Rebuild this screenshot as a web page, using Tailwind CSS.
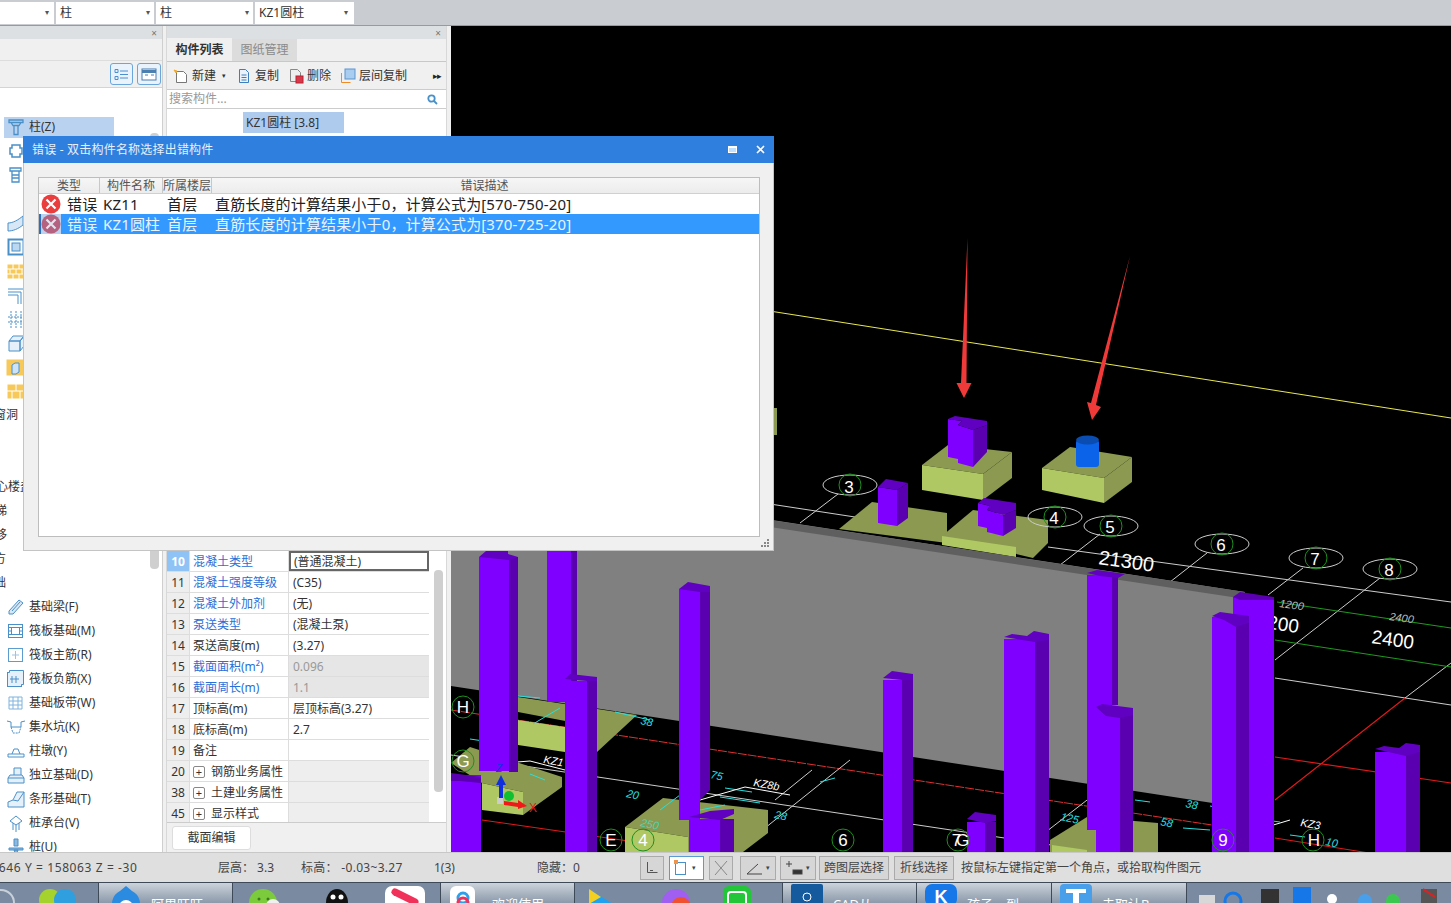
<!DOCTYPE html>
<html lang="zh">
<head>
<meta charset="UTF-8">
<title>错误 - 双击构件名称选择出错构件</title>
<script src="https://cdn.jsdelivr.net/npm/@tailwindcss/browser@4"></script>
</head>
<body class="m-0">
<div class="relative w-[1451px] h-[903px] overflow-hidden flex flex-col text-xs text-[#333] [font-family:'Noto_Sans','Noto_Sans_CJK_SC',sans-serif]">

  <!-- top combo row -->
  <div class="h-[26px] shrink-0 bg-[#c9ccd0] border-b border-[#9a9a9a] flex items-center gap-[2px]">
    <div class="w-[54px] h-[22px] bg-white flex items-center justify-end pr-[5px] text-[8px] text-[#555]">▾</div>
    <div class="w-[98px] h-[22px] bg-white flex items-center justify-between px-[4px]"><span>柱</span><span class="text-[8px] text-[#555]">▾</span></div>
    <div class="w-[97px] h-[22px] bg-white flex items-center justify-between px-[4px]"><span>柱</span><span class="text-[8px] text-[#555]">▾</span></div>
    <div class="w-[99px] h-[22px] bg-white flex items-center justify-between pl-[4px] pr-[6px]"><span>KZ1圆柱</span><span class="text-[8px] text-[#555]">▾</span></div>
  </div>

  <div class="h-[826px] shrink-0 flex bg-[#f0f0f0]">
    <!-- left tree panel -->
    <div class="w-[163px] shrink-0 flex flex-col bg-white overflow-hidden border-r border-[#cfcfcf]">
      <div class="h-[13px] shrink-0 bg-[#dde0e3] flex items-center justify-end pr-[5px] text-[10px] leading-none text-[#777]">×</div>
      <div class="h-[22px] shrink-0 bg-[#f0f0f0] border-b border-[#ddd]"></div>
      <div class="h-[27px] shrink-0 bg-[#f0f0f0] border-b border-[#d4d4d4] flex items-center justify-end gap-[4px] pr-[1px]">
        <div class="w-[23px] h-[22px] rounded-[3px] border border-[#6aa5dc] bg-[#eaf3fb] flex items-center justify-center">
          <svg width="15" height="13" fill="none" stroke="#4a90d0"><path d="M1 1.500h3v3h-3zM1 8.500h3v3h-3zM6 3h8M6 10h8M6 6.500h8"/></svg>
        </div>
        <div class="w-[24px] h-[22px] rounded-[3px] border border-[#6aa5dc] bg-[#eaf3fb] flex items-center justify-center">
          <svg width="16" height="13" fill="none" stroke="#4a7fb0"><rect x="1" y="1" width="14" height="11" fill="#fff"/><path d="M1 3.500h14" stroke-width="3"/><path d="M4 7h3M10 7h3"/></svg>
        </div>
      </div>
      <div class="flex-1 relative pt-[27px] overflow-hidden">
        <div class="flex items-center h-6"><div class="flex items-center w-[110px] h-[21px] ml-1 bg-[#b9d2ef]">
          <svg width="20" height="20" class="ml-[2px] mr-[3px]" fill="none" stroke="#4a90c8" stroke-width="1.300"><path d="M3 3h14v2.500h-14zM5 5.500l2 3h6l2-3M8 8.500v9h4v-9"/></svg><span>柱(Z)</span></div></div>
        <div class="flex items-center h-6 pl-[6px]"><svg width="20" height="20" fill="none" stroke="#4a90c8" stroke-width="1.500"><path d="M6 4h8v3h2v6h-2v3h-8v-3h-2v-6h2z"/></svg></div>
        <div class="flex items-center h-6 pl-[6px]"><svg width="20" height="20" fill="none" stroke="#4a90c8" stroke-width="1.300"><path d="M4 3h11v3h-11zM6 6v11h7v-11M6 10h7M6 13h7"/></svg></div>
        <div class="h-6"></div>
        <div class="flex items-center h-6 pl-[6px]"><svg width="20" height="20" fill="#d7e7f6" stroke="#4a90c8"><path d="M2 10c5 0 10-3 15-7v9c-5 4-10 6-15 6z"/></svg></div>
        <div class="flex items-center h-6 pl-[6px]"><svg width="20" height="20" fill="none" stroke="#4a90c8"><rect x="2.500" y="2.500" width="15" height="15" stroke-width="2"/><rect x="6" y="6" width="8" height="8" fill="#bcd7f0"/></svg></div>
        <div class="flex items-center h-6 pl-[6px]"><svg width="20" height="20" fill="#f6c95a" stroke="#fff"><rect x="1" y="3" width="18" height="15"/><path d="M1 8h18M1 13h18M7 3v5M13 3v5M4 8v5M10 8v5M16 8v5M7 13v5M13 13v5"/></svg></div>
        <div class="flex items-center h-6 pl-[6px]"><svg width="20" height="20" fill="none" stroke="#4a90c8"><path d="M2 4h16v15M2 7h13v12M2 10h10v9"/></svg></div>
        <div class="flex items-center h-6 pl-[6px]"><svg width="20" height="20" fill="none" stroke="#4a90c8" stroke-dasharray="2 1"><path d="M5 2v17M10 2v17M15 2v17M2 8h16M2 13h16"/></svg></div>
        <div class="flex items-center h-6 pl-[6px]"><svg width="20" height="20" fill="#e6f0fa" stroke="#4a90c8"><path d="M3 8l4-5h11l-4 5zM3 8h11v10h-11zM14 8l4-5v10l-4 5z"/></svg></div>
        <div class="flex items-center h-6 pl-[6px]"><svg width="20" height="20" fill="#f6c95a" stroke="#4a90c8"><rect x="1" y="3" width="18" height="15" stroke="#f6c95a"/><path d="M6 8l3-2h4v9l-3 2h-4z" fill="#cfe3f6"/></svg></div>
        <div class="flex items-center h-6 pl-[6px]"><svg width="20" height="20" fill="#f6c95a" stroke="#fff"><rect x="1" y="3" width="18" height="15"/><path d="M1 10h18M10 3v7M6 10v8M14 10v8"/></svg></div>
        <div class="flex items-center h-6"><div class="w-[18px] whitespace-nowrap flex justify-end"><span class="shrink-0">门窗洞</span></div></div>
        <div class="h-6"></div>
        <div class="h-6"></div>
        <div class="flex items-center h-6"><div class="w-[32px] whitespace-nowrap flex justify-end"><span class="shrink-0">空心楼盖</span></div></div>
        <div class="flex items-center h-6"><div class="w-[7px] whitespace-nowrap flex justify-end"><span class="shrink-0">楼梯</span></div></div>
        <div class="flex items-center h-6"><div class="w-[7px] whitespace-nowrap flex justify-end"><span class="shrink-0">平移</span></div></div>
        <div class="flex items-center h-6"><div class="w-[6px] whitespace-nowrap flex justify-end"><span class="shrink-0">土方</span></div></div>
        <div class="flex items-center h-6"><div class="w-[6px] whitespace-nowrap flex justify-end"><span class="shrink-0">基础</span></div></div>
        <div class="flex items-center h-6 pl-[6px] gap-[3px]"><svg width="20" height="20" fill="#d7e7f6" stroke="#4a90c8"><path d="M3 14l10-11 4 3-10 11-4 0z"/><path d="M6 14l8-9"/></svg><span>基础梁(F)</span></div>
        <div class="flex items-center h-6 pl-[6px] gap-[3px]"><svg width="20" height="20" fill="none" stroke="#4a90c8"><rect x="2.500" y="3.500" width="14" height="13"/><rect x="5.500" y="6.500" width="8" height="7"/><path d="M2 6.500h3M2 10h3M14 6.500h3M14 10h3M2 13.500h3M14 13.500h3"/></svg><span>筏板基础(M)</span></div>
        <div class="flex items-center h-6 pl-[6px] gap-[3px]"><svg width="20" height="20" fill="none" stroke="#5c9ccf"><rect x="2.500" y="3.500" width="14" height="13"/><path d="M9.500 6v8M6 10h7" stroke="#9cc3e4"/></svg><span>筏板主筋(R)</span></div>
        <div class="flex items-center h-6 pl-[6px] gap-[3px]"><svg width="20" height="20" fill="#e6f0fa" stroke="#4a90c8"><rect x="1.500" y="3.500" width="14" height="14"/><path d="M3.500 3.500v-2h14v14h-2"/><path d="M4 10h9M6 7v7M10 7v7" fill="none"/></svg><span>筏板负筋(X)</span></div>
        <div class="flex items-center h-6 pl-[6px] gap-[3px]"><svg width="20" height="20" fill="none" stroke="#7eb3de"><path d="M3 4h13v12h-13zM7 4v12M12 4v12M3 8h13M3 12h13"/></svg><span>基础板带(W)</span></div>
        <div class="flex items-center h-6 pl-[6px] gap-[3px]"><svg width="20" height="20" fill="none" stroke="#4a90c8"><path d="M1 4l4 1v5h10v-5l4-1"/><path d="M5 10l2 6h6l2-6" stroke-dasharray="2 1"/></svg><span>集水坑(K)</span></div>
        <div class="flex items-center h-6 pl-[6px] gap-[3px]"><svg width="20" height="20" fill="none" stroke="#4a90c8"><path d="M2 13h16v3h-16zM6 13l2-5h4l2 5"/></svg><span>柱墩(Y)</span></div>
        <div class="flex items-center h-6 pl-[6px] gap-[3px]"><svg width="20" height="20" fill="#e6f0fa" stroke="#4a90c8"><path d="M2 13l2-3h12l2 3v5h-16zM8 10v-7h7v7"/><path d="M2 13h16"/></svg><span>独立基础(D)</span></div>
        <div class="flex items-center h-6 pl-[6px] gap-[3px]"><svg width="20" height="20" fill="#e6f0fa" stroke="#4a90c8"><path d="M2 18v-5l5-2 4-8h7v15z"/><path d="M7 11l5 1 6-9"/></svg><span>条形基础(T)</span></div>
        <div class="flex items-center h-6 pl-[6px] gap-[3px]"><svg width="20" height="20" fill="none" stroke="#4a90c8"><path d="M4 8l6-5 6 5-6 4zM7 10v7M10 12v7M13 10v7"/></svg><span>桩承台(V)</span></div>
        <div class="flex items-center h-6 pl-[6px] gap-[3px]"><svg width="20" height="20" fill="#8db9df" stroke="#4a90c8"><path d="M8 2h4v7h-4zM3 11h14v2h-14zM8 13h4l-2 5z"/></svg><span>桩(U)</span></div>
        <!-- scrollbar thumb -->
        <div class="absolute left-[150px] top-[45px] w-[9px] h-[436px] rounded-[4px] bg-[#cfcfcf]"></div>
      </div>
    </div>

    <div class="w-[3px] shrink-0"></div>

    <!-- component list + property panel -->
    <div class="w-[281px] shrink-0 flex flex-col border-x border-[#d8d8d8]">
      <div class="h-[13px] shrink-0 bg-[#dde0e3] flex items-center justify-end pr-[5px] text-[10px] leading-none text-[#777]">×</div>
      <div class="h-[23px] shrink-0 flex items-end border-b border-[#c8c8c8]">
        <div class="w-[65px] h-[23px] flex items-center justify-center font-bold bg-[#f0f0f0]">构件列表</div>
        <div class="w-[65px] h-[22px] flex items-center justify-center bg-[#dcdcdc] text-[#8a8a8a]">图纸管理</div>
      </div>
      <div class="h-[28px] shrink-0 flex items-center pl-[6px] border-b border-[#ccc]">
        <svg width="16" height="16" fill="#fff" stroke="#777"><path d="M3.500 3.500h7l3 3v8h-10z"/><path d="M1 2l3 1-1 2z" fill="#f2a82b" stroke="#f2a82b"/></svg>
        <span class="ml-[3px]">新建</span><span class="ml-[6px] text-[7px]">▾</span>
        <svg width="14" height="16" class="ml-[11px]" fill="#eaf2fa" stroke="#3c7fbf"><path d="M2.500 1.500h6l3 3v10h-9z"/><path d="M4.500 7h5M4.500 9.500h5M4.500 12h5"/></svg>
        <span class="ml-[4px]">复制</span>
        <svg width="16" height="16" class="ml-[9px]" fill="#eee" stroke="#888"><path d="M2.500 1.500h7l3 3v9h-10z"/><rect x="8" y="8" width="7" height="7" fill="#d8394a" stroke="#b82030"/></svg>
        <span class="ml-[3px]">删除</span>
        <svg width="16" height="16" class="ml-[9px]" fill="none" stroke="#f08a24"><path d="M1.500 5v9.500h9"/><rect x="5" y="1" width="10" height="10" fill="#a9cdf0" stroke="#5a94cf"/></svg>
        <span class="ml-[3px]">层间复制</span>
        <span class="ml-auto mr-[5px] text-[9px] tracking-[-1px] text-[#222]">▸▸</span>
      </div>
      <div class="h-[19px] shrink-0 bg-white border-b border-[#ccc] flex items-center justify-between pl-[2px] pr-[8px] text-[#999]">
        <span>搜索构件...</span>
        <svg width="11" height="11" fill="none" stroke="#4a90c8" stroke-width="1.800"><circle cx="4.500" cy="4.500" r="3.200"/><path d="M7 7l3 3"/></svg>
      </div>
      <div class="flex-1 bg-white pt-[3px] pl-[76px]">
        <div class="w-[101px] h-[21px] bg-[#aecbee] flex items-center pl-[3px]">KZ1圆柱 [3.8]</div>
      </div>
      <div class="relative h-[271px] shrink-0 bg-white">
        <div class="w-[262px] h-[271px] overflow-hidden [&>div>div]:pt-[1px]">
          <div class="flex h-[21px] border-b border-[#ddd]"><div class="w-[22px] bg-[#8fc2f5] text-white font-bold flex items-center justify-center">10</div><div class="w-[100px] pl-[3px] flex items-center text-[#2a6fd6] border-x border-[#ddd]">混凝土类型</div><div class="w-[140px] pl-[3px] flex items-center border-2 border-[#666]">(普通混凝土)</div></div>
          <div class="flex h-[21px] border-b border-[#ddd]"><div class="w-[22px] bg-[#eee] flex items-center justify-center">11</div><div class="w-[100px] pl-[3px] flex items-center text-[#2a6fd6] border-x border-[#ddd]">混凝土强度等级</div><div class="w-[140px] pl-[4px] flex items-center">(C35)</div></div>
          <div class="flex h-[21px] border-b border-[#ddd]"><div class="w-[22px] bg-[#eee] flex items-center justify-center">12</div><div class="w-[100px] pl-[3px] flex items-center text-[#2a6fd6] border-x border-[#ddd]">混凝土外加剂</div><div class="w-[140px] pl-[4px] flex items-center">(无)</div></div>
          <div class="flex h-[21px] border-b border-[#ddd]"><div class="w-[22px] bg-[#eee] flex items-center justify-center">13</div><div class="w-[100px] pl-[3px] flex items-center text-[#2a6fd6] border-x border-[#ddd]">泵送类型</div><div class="w-[140px] pl-[4px] flex items-center">(混凝土泵)</div></div>
          <div class="flex h-[21px] border-b border-[#ddd]"><div class="w-[22px] bg-[#eee] flex items-center justify-center">14</div><div class="w-[100px] pl-[3px] flex items-center border-x border-[#ddd]">泵送高度(m)</div><div class="w-[140px] pl-[4px] flex items-center">(3.27)</div></div>
          <div class="flex h-[21px] border-b border-[#ddd]"><div class="w-[22px] bg-[#eee] flex items-center justify-center">15</div><div class="w-[100px] pl-[3px] flex items-center text-[#2a6fd6] border-x border-[#ddd]">截面面积(m²)</div><div class="w-[140px] pl-[4px] flex items-center bg-[#e6e6e6] text-[#999]">0.096</div></div>
          <div class="flex h-[21px] border-b border-[#ddd]"><div class="w-[22px] bg-[#eee] flex items-center justify-center">16</div><div class="w-[100px] pl-[3px] flex items-center text-[#2a6fd6] border-x border-[#ddd]">截面周长(m)</div><div class="w-[140px] pl-[4px] flex items-center bg-[#e6e6e6] text-[#999]">1.1</div></div>
          <div class="flex h-[21px] border-b border-[#ddd]"><div class="w-[22px] bg-[#eee] flex items-center justify-center">17</div><div class="w-[100px] pl-[3px] flex items-center border-x border-[#ddd]">顶标高(m)</div><div class="w-[140px] pl-[4px] flex items-center">层顶标高(3.27)</div></div>
          <div class="flex h-[21px] border-b border-[#ddd]"><div class="w-[22px] bg-[#eee] flex items-center justify-center">18</div><div class="w-[100px] pl-[3px] flex items-center border-x border-[#ddd]">底标高(m)</div><div class="w-[140px] pl-[4px] flex items-center">2.7</div></div>
          <div class="flex h-[21px] border-b border-[#ddd]"><div class="w-[22px] bg-[#eee] flex items-center justify-center">19</div><div class="w-[100px] pl-[3px] flex items-center border-x border-[#ddd]">备注</div><div class="w-[140px]"></div></div>
          <div class="flex h-[21px] border-b border-[#ddd]"><div class="w-[22px] bg-[#eee] flex items-center justify-center">20</div><div class="w-[100px] pl-[3px] flex items-center gap-[6px] border-x border-[#ddd]"><span class="w-[12px] h-[12px] border border-[#888] rounded-[2px] flex items-center justify-center text-[11px] leading-none">+</span>钢筋业务属性</div><div class="w-[140px] bg-[#eee]"></div></div>
          <div class="flex h-[21px] border-b border-[#ddd]"><div class="w-[22px] bg-[#eee] flex items-center justify-center">38</div><div class="w-[100px] pl-[3px] flex items-center gap-[6px] border-x border-[#ddd]"><span class="w-[12px] h-[12px] border border-[#888] rounded-[2px] flex items-center justify-center text-[11px] leading-none">+</span>土建业务属性</div><div class="w-[140px] bg-[#eee]"></div></div>
          <div class="flex h-[21px] border-b border-[#ddd]"><div class="w-[22px] bg-[#eee] flex items-center justify-center">45</div><div class="w-[100px] pl-[3px] flex items-center gap-[6px] border-x border-[#ddd]"><span class="w-[12px] h-[12px] border border-[#888] rounded-[2px] flex items-center justify-center text-[11px] leading-none">+</span>显示样式</div><div class="w-[140px] bg-[#eee]"></div></div>
        </div>
        <div class="absolute left-[267px] top-[19px] w-[9px] h-[222px] rounded-[4px] bg-[#cfcfcf]"></div>
      </div>
      <div class="h-[30px] shrink-0 bg-[#f0f0f0] border-t border-[#ccc] flex items-center pl-[5px]">
        <div class="w-[79px] h-[24px] bg-white border border-[#ddd] rounded-[3px] flex items-center justify-center">截面编辑</div>
      </div>
    </div>

    <div class="w-[4px] shrink-0"></div>

    <!-- 3D view -->
    <div class="flex-1 bg-black overflow-hidden">
      <svg width="1000" height="826" viewBox="451 26 1000 826" class="block" font-family="Liberation Sans, sans-serif">
        <path d="M451 261L1451 418" stroke="#e8e850" fill="none"/>
        <!-- plan grid behind wall -->
        <g fill="none" stroke="#ccc">
          <path d="M770 504L855 517M1048 547L1451 602M1275 678L1451 705"/>
          <path d="M838 494L800 523M1100 534L1060 565M1207 553L1170 582M1303 568L1268 595M1380 578L1275 660M1405 698L1451 663"/>
        </g>
        <g fill="none" stroke="#1f9a1f"><path d="M1277 602L1451 628M1275 640L1451 667"/></g>
        <path d="M1275 757L1451 783M1275 800L1405 698" stroke="#e01a1a" fill="none" stroke-width="1.200"/>

        <!-- far slabs -->
        <rect x="774" y="408" width="3" height="27" fill="#8b9a50"/>
        <path d="M922 465L948 445L1012 452L983 474z" fill="#8b9a50"/><path d="M922 465L983 474V500L922 490z" fill="#b0c864"/><path d="M983 474L1012 452V478L983 500z" fill="#8b9a50"/>
        <path d="M1042 468L1070 447L1132 457L1104 478z" fill="#8b9a50"/><path d="M1042 468L1104 478V503L1042 490z" fill="#b0c864"/><path d="M1104 478L1132 457V482L1104 503z" fill="#8b9a50"/>
        <path d="M839 529L872 502L947 513V543z" fill="#8b9a50"/>
        <path d="M942 536L973 510L1048 520V543L1033 558z" fill="#8b9a50"/><path d="M942 536L1016 547V557L942 545z" fill="#b0c864"/>

        <!-- L-shaped and round columns on slabs -->
        <path d="M948 419V457L958 459V463L973 467V430L958 425L962 421z" fill="#7f00ff"/><path d="M973 430L987 425V452L973 467z" fill="#5a00b0"/><path d="M948 419L955 416L987 421V425L973 430L958 425L962 421z" fill="#6000c0"/>
        <rect x="1076" y="440" width="23" height="27" rx="3" fill="#0a63e8"/><ellipse cx="1087.500" cy="440" rx="11.500" ry="4.500" fill="#0a4cb0"/>
        <path d="M878 487V523L897 526V490z" fill="#7f00ff"/><path d="M897 490L908 483V518L897 526z" fill="#5a00b0"/><path d="M878 487L886 479L908 483L897 490z" fill="#6000c0"/>
        <path d="M978 503V526L987 528V532L1003 536V515L987 510L990 506z" fill="#7f00ff"/><path d="M1003 515L1016 510V528L1003 536z" fill="#5a00b0"/><path d="M978 503L984 498L1016 503V510L1003 515L987 510L990 506z" fill="#6000c0"/>

        <!-- red pointers -->
        <polygon points="967.500,238 966.500,383 971.500,383 964,398 956.500,383 961,383" fill="#f03a3a"/>
        <polygon points="1130,256 1096,405 1101,407 1092,420 1087,402 1091,403" fill="#f03a3a"/>

        <!-- axis bubbles -->
        <g fill="none" stroke="#ccc">
          <ellipse cx="850" cy="485" rx="27" ry="10"/><ellipse cx="1055" cy="517" rx="27" ry="10"/><ellipse cx="1111" cy="526" rx="27" ry="10"/><ellipse cx="1222" cy="544" rx="27" ry="10"/><ellipse cx="1316" cy="558" rx="27" ry="10"/><ellipse cx="1390" cy="569" rx="27" ry="10"/>
        </g>
        <g fill="none" stroke="#1f8f1f">
          <circle cx="850" cy="485" r="11"/><circle cx="1055" cy="517" r="11"/><circle cx="1111" cy="526" r="11"/><circle cx="1222" cy="544" r="11"/><circle cx="1316" cy="558" r="11"/><circle cx="1390" cy="569" r="11"/>
        </g>
        <g fill="#fff" font-size="17" text-anchor="middle">
          <text x="849" y="493">3</text><text x="1054" y="524">4</text><text x="1110" y="533">5</text><text x="1221" y="551">6</text><text x="1315" y="565">7</text><text x="1389" y="576">8</text>
        </g>
        <text x="1098" y="564" fill="#fff" font-size="20" transform="rotate(8 1098 564)">21300</text>
        <text x="1256" y="627" fill="#fff" font-size="19" transform="rotate(8 1256 627)">1200</text>
        <text x="1371" y="643" fill="#fff" font-size="19" transform="rotate(8 1371 643)">2400</text>
        <text x="1279" y="607" fill="#bbb" font-size="11" font-style="italic" transform="rotate(8 1279 607)">1200</text>
        <text x="1389" y="620" fill="#bbb" font-size="11" font-style="italic" transform="rotate(8 1389 620)">2400</text>

        <!-- wall -->
        <path d="M451 471L1245 592V808L451 686z" fill="#808080"/>
        <path d="M770 520L1245 592V599L770 527z" fill="#5f5f5f"/>

        <!-- near plan lines -->
        <path d="M451 710L1212 825" stroke="#e03030" stroke-dasharray="9 1" fill="none"/>
        <path d="M451 755L1451 905" stroke="#ccc" fill="none"/>
        <path d="M482 820L677 848" stroke="#e01a1a" fill="none"/>
        <path d="M1275 838L1451 866" stroke="#e01a1a" fill="none"/>
        <path d="M775 800L812 770M735 852L850 760M1020 852L1100 790" stroke="#ccc" fill="none"/>
        <path d="M1240 835L1290 820" stroke="#fff" fill="none"/>

        <!-- near slabs -->
        <path d="M518 697L637 715L597 752V727L518 712z" fill="#8b9a50"/><path d="M518 720L565 727V752L518 745z" fill="#b0c864"/>
        <path d="M451 763L470 747L562 777V787L523 815V792L482 783z" fill="#8b9a50"/><path d="M482 783L523 792V815L482 810z" fill="#b0c864"/>
        <path d="M625 827L663 798L768 810V833L743 852H688V837z" fill="#8b9a50"/><path d="M625 827L688 837V852H625z" fill="#b0c864"/>
        <path d="M1050 840L1087 817L1158 823V852H1050z" fill="#8b9a50"/><path d="M1052 845L1087 850V852H1052z" fill="#b0c864"/>

        <!-- cyan dimension marks -->
        <g fill="none" stroke="#28e0e0">
          <path d="M518 696L540 698M470 739L490 742M533 724L560 708M615 712L650 720M530 774L545 780M660 810L680 795M700 810L725 805M720 797L760 803M725 788L752 792M820 782L835 778M1135 800L1150 802M1183 828L1210 830M1210 806L1230 810M1250 818L1280 822M1290 835L1305 837"/>
        </g>
        <g fill="#28e0e0" font-size="11" font-style="italic">
          <text x="640" y="724" transform="rotate(12 640 724)">38</text>
          <text x="626" y="797" transform="rotate(12 626 797)">20</text>
          <text x="710" y="778" transform="rotate(12 710 778)">75</text>
          <text x="774" y="818" transform="rotate(12 774 818)">28</text>
          <text x="640" y="826" transform="rotate(12 640 826)" fill="#55d0b0">250</text>
          <text x="1060" y="820" transform="rotate(12 1060 820)">125</text>
          <text x="1185" y="807" transform="rotate(12 1185 807)">38</text>
          <text x="1160" y="825" transform="rotate(12 1160 825)">58</text>
          <text x="1325" y="845" transform="rotate(12 1325 845)">10</text>
        </g>
        <g fill="#fff" font-size="11" font-style="italic">
          <text x="543" y="763" transform="rotate(10 543 763)">KZ1</text>
          <text x="753" y="786" transform="rotate(10 753 786)">KZ8b</text>
          <text x="1300" y="826" transform="rotate(10 1300 826)">KZ3</text>
        </g>
        <path d="M517 762L530 761L565 770M700 800L745 787L790 795" stroke="#fff" fill="none"/>

        <!-- columns, back to front -->
        <g>
          <path d="M547 540H571V702H547z" fill="#7f00ff"/><path d="M571 540H577V700H571z" fill="#5a00b0"/>
          <path d="M479 557H509V771H479z" fill="#7f00ff"/><path d="M509 557H518V772H509z" fill="#5a00b0"/><path d="M479 557L486 551H508V554L518 557L509 560z" fill="#6000c0"/>
          <path d="M565 681H587V852H565z" fill="#7f00ff"/><path d="M587 681H597V852H587z" fill="#5a00b0"/><path d="M565 679L570 674L597 677V681H587z" fill="#6000c0"/>
          <path d="M679 589H700V820H679z" fill="#7f00ff"/><path d="M700 589H710V790L700 800z" fill="#5a00b0"/><path d="M679 589L688 582L710 586V592L700 592z" fill="#6000c0"/>
          <path d="M689 819H720V852H689z" fill="#7f00ff"/><path d="M720 819H734V852H720z" fill="#5a00b0"/><path d="M689 817L710 811L734 809V814L720 820z" fill="#6000c0"/>
          <path d="M883 680H902V852H883z" fill="#7f00ff"/><path d="M902 680H913V852H902z" fill="#5a00b0"/><path d="M883 678L892 671L913 674V680H902z" fill="#6000c0"/>
          <path d="M451 775H481V852H451z" fill="#7f00ff"/><path d="M451 773L481 777V783L460 781H451z" fill="#5a00b0"/>
          <path d="M967 822H985V852H967z" fill="#7f00ff"/><path d="M985 822H996V852H985z" fill="#5a00b0"/><path d="M967 819L975 812L996 815V821L985 823z" fill="#6000c0"/>
          <path d="M1004 639H1035V852H1004z" fill="#7f00ff"/><path d="M1035 639H1049V852H1035z" fill="#5a00b0"/><path d="M1004 637L1012 634L1027 636L1034 631L1049 634V640L1035 642z" fill="#6000c0"/>
          <path d="M1087 575H1112V830H1087z" fill="#7f00ff"/><path d="M1112 577H1118V705H1112z" fill="#5a00b0"/><path d="M1087 573L1097 570L1125 574L1118 578L1100 576z" fill="#6000c0"/>
          <path d="M1096 715H1120V852H1096zM1087 710H1100V830H1087z" fill="#7f00ff"/><path d="M1120 715H1133V852H1120z" fill="#5a00b0"/><path d="M1096 707L1102 704L1133 708V715L1120 718L1106 716z" fill="#6000c0"/>
          <path d="M1233 597H1274V852H1233z" fill="#7f00ff"/><path d="M1233 597L1240 592L1274 597V600L1240 600z" fill="#5a00b0"/>
          <path d="M1212 617H1236V852H1212z" fill="#7f00ff"/><path d="M1236 617H1249V852H1236z" fill="#5a00b0"/><path d="M1212 616L1220 612L1249 616V623L1236 627L1224 620z" fill="#6000c0"/>
          <path d="M1375 752H1406V852H1375z" fill="#7f00ff"/><path d="M1406 752H1420V852H1406z" fill="#5a00b0"/><path d="M1375 749L1384 746L1399 748L1406 743L1420 745V752L1406 756z" fill="#6000c0"/>
        </g>

        <!-- letters over the near view -->
        <g fill="none" stroke="#1f8f1f">
          <circle cx="463" cy="707" r="11"/><circle cx="463" cy="761" r="11"/><circle cx="611" cy="840" r="11"/><circle cx="643" cy="840" r="11"/><circle cx="843" cy="840" r="11"/><circle cx="958" cy="840" r="11"/><circle cx="1223" cy="840" r="11"/><circle cx="1313" cy="840" r="11"/>
        </g>
        <g fill="#fff" font-size="17" text-anchor="middle">
          <text x="463" y="713">H</text><text x="463" y="767">G</text><text x="611" y="846">E</text><text x="643" y="846">4</text><text x="843" y="846">6</text><text x="958" y="846" letter-spacing="-5">7G</text><text x="1223" y="846">9</text><text x="1314" y="846">H</text>
        </g>

        <!-- axis gizmo -->
        <rect x="497" y="797" width="6" height="7" fill="#ccc"/>
        <polygon points="499,798 499,785 496,785 501,775 506,785 503,785 503,798" fill="#1030e0"/>
        <circle cx="509" cy="796" r="5" fill="#10c030"/>
        <polygon points="504,801 518,803 518,800 527,806 518,809 518,807 504,805" fill="#f01818"/>
        <text x="529" y="812" fill="#f01818" font-size="12">X</text>
        <text x="496" y="772" fill="#1030e0" font-size="10" font-style="italic">Z</text>
      </svg>
    </div>
  </div>

  <!-- status bar -->
  <div class="h-[30px] shrink-0 bg-[#dfdfdf] border-t border-[#c8c8c8] flex items-center text-[#444] whitespace-nowrap">
    <div class="w-[218px] overflow-hidden flex"><span class="-ml-[5px] tracking-[0.6px]">.646 Y = 158063 Z = -30</span></div>
    <div class="w-[83px]">层高： 3.3</div>
    <div class="w-[133px] tracking-[0.3px]">标高： -0.03~3.27</div>
    <div class="w-[103px]">1(3)</div>
    <div class="w-[103px]">隐藏：0</div>
    <div class="w-[24px] h-[24px] border border-[#aaa] bg-[#d6d6d6] flex items-center justify-center"><svg width="14" height="14" fill="none" stroke="#555"><path d="M2.500 1v10.500h10M5 9.500h3"/></svg></div>
    <div class="w-[35px] h-[24px] ml-[5px] border border-[#5b9bd5] bg-white flex items-center pl-[4px] gap-[4px]"><svg width="14" height="16" fill="none" stroke="#4a90c8"><rect x="1.500" y="2.500" width="10" height="12"/><rect x="0" y="0" width="4" height="4" fill="#f0944a" stroke="none"/></svg><span class="text-[7px]">▾</span></div>
    <div class="w-[24px] h-[24px] ml-[5px] border border-[#aaa] bg-[#d6d6d6] flex items-center justify-center"><svg width="16" height="16" fill="none" stroke="#888"><path d="M2 1l12 14M14 1l-12 14"/></svg></div>
    <div class="w-[36px] h-[24px] ml-[7px] border border-[#aaa] bg-[#d6d6d6] flex items-center pl-[4px] gap-[3px]"><svg width="18" height="16" fill="none" stroke="#444"><path d="M2 14h15M2 14l11-10"/></svg><span class="text-[7px]">▾</span></div>
    <div class="w-[36px] h-[24px] ml-[4px] border border-[#aaa] bg-[#d6d6d6] flex items-center pl-[4px] gap-[3px]"><svg width="18" height="16" fill="none" stroke="#444"><path d="M1 4h6M4 1v6"/><rect x="8" y="10" width="9" height="4" fill="#333"/></svg><span class="text-[7px]">▾</span></div>
    <div class="w-[70px] h-[24px] ml-[3px] border border-[#aaa] bg-[#d6d6d6] flex items-center justify-center">跨图层选择</div>
    <div class="w-[60px] h-[24px] ml-[5px] border border-[#aaa] bg-[#d6d6d6] flex items-center justify-center">折线选择</div>
    <div class="ml-[7px]">按鼠标左键指定第一个角点，或拾取构件图元</div>
  </div>

  <!-- taskbar, cut off by the bottom of the shot -->
  <div class="h-[21px] shrink-0 bg-[#7a8ba1] border-t border-[#3f4a58] flex overflow-hidden">
    <div class="w-[98px] shrink-0 relative">
      <svg width="98" height="21"><circle cx="1" cy="20" r="13" fill="none" stroke="#c8d0da" stroke-width="2"/><circle cx="50" cy="17" r="11" fill="#a6d22e"/><circle cx="65" cy="17" r="11" fill="#2f9fe0"/></svg>
    </div>
    <div class="w-[135px] shrink-0 bg-gradient-to-b from-[#ccd3db] to-[#8b99aa] border-x border-[#3f4a58] flex pl-[10px] gap-[8px]">
      <svg width="34" height="21"><path d="M17 0l6 5a14 14 0 1 1-12 0z" transform="translate(0 3)" fill="#2a8be0"/><circle cx="17" cy="24" r="7" fill="#fff"/></svg>
      <span class="mt-[15px] text-white text-[13px] leading-none">阿里旺旺</span>
    </div>
    <div class="w-[207px] shrink-0">
      <svg width="207" height="21"><circle cx="30" cy="20" r="14" fill="#7ccb3c"/><circle cx="26" cy="16" r="1.500" fill="#3c7a1c"/><circle cx="35" cy="16" r="1.500" fill="#3c7a1c"/><circle cx="40" cy="23" r="7" fill="#f0f0f0"/><ellipse cx="104" cy="20" rx="11" ry="14" fill="#111"/><circle cx="100" cy="14" r="2.500" fill="#fff"/><circle cx="108" cy="14" r="2.500" fill="#fff"/><rect x="152" y="3" width="40" height="30" rx="7" fill="#fff"/><path d="M162 9l20 10" stroke="#f0325a" stroke-width="7" stroke-linecap="round"/></svg>
    </div>
    <div class="w-[135px] shrink-0 bg-gradient-to-b from-[#ccd3db] to-[#8b99aa] border-x border-[#3f4a58] flex pl-[9px] gap-[17px]">
      <svg width="25" height="21"><rect x="0" y="3" width="25" height="28" rx="6" fill="#fff"/><circle cx="13" cy="15" r="5" fill="none" stroke="#2fa0e8" stroke-width="3"/><path d="M8 20a5 5 0 0 1 10 0" stroke="#f0325a" stroke-width="3" fill="none"/></svg>
      <span class="mt-[15px] text-white text-[13px] leading-none">欢迎使用</span>
    </div>
    <div class="w-[207px] shrink-0">
      <svg width="207" height="21"><path d="M14 6l24 15h-24z" fill="#1fa0f0"/><path d="M14 6l12 8-12 7z" fill="#f5d020"/><circle cx="101" cy="20" r="14" fill="#a05ff0"/><circle cx="106" cy="24" r="10" fill="#f05030"/><rect x="148" y="3" width="28" height="30" rx="6" fill="#22c638"/><rect x="153" y="9" width="18" height="20" rx="3" fill="none" stroke="#fff" stroke-width="2"/></svg>
    </div>
    <div class="w-[135px] shrink-0 bg-gradient-to-b from-[#ccd3db] to-[#8b99aa] border-x border-[#3f4a58] flex pl-[8px] gap-[10px]">
      <svg width="32" height="21"><rect x="0" y="1" width="32" height="22" rx="2" fill="#155a9c"/><circle cx="16" cy="14" r="4" fill="none" stroke="#fff"/></svg>
      <span class="mt-[15px] text-white text-[13px] leading-none">CAD从</span>
    </div>
    <div class="w-[135px] shrink-0 bg-gradient-to-b from-[#ccd3db] to-[#8b99aa] border-r border-[#3f4a58] flex pl-[8px] gap-[10px]">
      <svg width="32" height="21"><rect width="32" height="22" y="1" rx="7" fill="#1678e8"/><text x="16" y="20" font-size="18" font-weight="700" fill="#fff" text-anchor="middle" font-family="Liberation Sans">K</text></svg>
      <span class="mt-[15px] text-white text-[13px] leading-none">孩子一到</span>
    </div>
    <div class="w-[135px] shrink-0 bg-gradient-to-b from-[#ccd3db] to-[#8b99aa] border-r border-[#3f4a58] flex pl-[8px] gap-[10px]">
      <svg width="32" height="21"><rect width="32" height="22" y="1" rx="4" fill="#4a9fea"/><path d="M6 6h20v4h-7v12h-6v-12h-7z" fill="#fff"/></svg>
      <span class="mt-[15px] text-white text-[13px] leading-none">去取认B</span>
    </div>
    <div class="flex-1">
      <svg width="264" height="21"><rect x="12" y="12" width="16" height="9" fill="#d8d8d8"/><circle cx="46" cy="18" r="8" fill="none" stroke="#1678e8" stroke-width="3"/><rect x="74" y="6" width="18" height="15" fill="#333"/><rect x="106" y="4" width="18" height="17" fill="#1678e8"/><circle cx="145" cy="16" r="5" fill="#fff"/><circle cx="178" cy="18" r="7" fill="#4a9fea"/><circle cx="206" cy="18" r="7" fill="#3cc850"/><rect x="234" y="6" width="16" height="15" fill="#555"/><path d="M236 6l12 8" stroke="#e02020" stroke-width="2"/></svg>
    </div>
  </div>

  <!-- error dialog -->
  <div class="absolute left-[23px] top-[136px] w-[751px] h-[415px] bg-[#f0f0f0] border border-[#c4c4c4] flex flex-col">
    <div class="h-[27px] shrink-0 -mx-px -mt-px bg-[#2f7fdf] flex items-center justify-between pl-[9px] pr-[9px] text-[#e6f0fb]">
      <span class="tracking-[0.2px]">错误 - 双击构件名称选择出错构件</span>
      <div class="flex items-center gap-[19px]">
        <svg width="9" height="9" fill="#bfe0ff" stroke="#fff"><rect x="0.500" y="1.500" width="8" height="6"/><path d="M0 2h9" stroke-width="2"/></svg>
        <svg width="9" height="9" stroke="#fff" stroke-width="1.600"><path d="M1 1l7 7M8 1l-7 7"/></svg>
      </div>
    </div>
    <div class="flex-1 relative pt-[14px] pl-[14px]">
      <div class="w-[722px] h-[360px] bg-white border border-[#bdbdbd] flex flex-col">
        <div class="h-[16px] shrink-0 flex bg-gradient-to-b from-[#f6f6f6] to-[#ececec] border-b border-[#d0d0d0] text-[#555] leading-none">
          <div class="w-[61px] flex items-center justify-center border-r border-[#c8c8c8]">类型</div>
          <div class="w-[63px] flex items-center justify-center border-r border-[#c8c8c8]">构件名称</div>
          <div class="w-[49px] flex items-center border-r border-[#c8c8c8]">所属楼层</div>
          <div class="flex-1 flex items-center justify-center pr-[2px]">错误描述</div>
        </div>
        <div class="h-[20px] flex items-center text-[15px] leading-[18px] tracking-[0.15px] whitespace-nowrap text-[#222]">
          <svg width="20" height="20" class="ml-[2px]"><circle cx="10" cy="10" r="9.500" fill="#ea3d3d"/><path d="M5.500 5.500l9 9M14.500 5.500l-9 9" stroke="#fff" stroke-width="2.200"/></svg>
          <span class="ml-[6px] w-[36px]">错误</span><span class="w-[64px]">KZ11</span><span class="w-[48px]">首层</span><span>直筋长度的计算结果小于0，计算公式为[570-750-20]</span>
        </div>
        <div class="h-[20px] flex items-center text-[15px] leading-[18px] tracking-[0.15px] whitespace-nowrap text-[#e8f3ff] bg-[#3399ff]">
          <div class="w-[22px] h-[20px] flex items-center bg-[#bcd2ee] border-l-2 border-[#2a6fc0]"><svg width="20" height="20"><circle cx="10" cy="10" r="9.500" fill="#b4627f"/><path d="M5.500 5.500l9 9M14.500 5.500l-9 9" stroke="#e4e4ee" stroke-width="2.200"/></svg></div>
          <span class="ml-[6px] w-[36px]">错误</span><span class="w-[64px]">KZ1圆柱</span><span class="w-[48px]">首层</span><span>直筋长度的计算结果小于0，计算公式为[370-725-20]</span>
        </div>
      </div>
      <svg width="9" height="9" fill="#888" class="absolute right-[3px] bottom-[2px]"><rect x="6" y="0" width="2" height="2"/><rect x="3" y="3" width="2" height="2"/><rect x="6" y="3" width="2" height="2"/><rect x="0" y="6" width="2" height="2"/><rect x="3" y="6" width="2" height="2"/><rect x="6" y="6" width="2" height="2"/></svg>
    </div>
  </div>
</div>
</body>
</html>
